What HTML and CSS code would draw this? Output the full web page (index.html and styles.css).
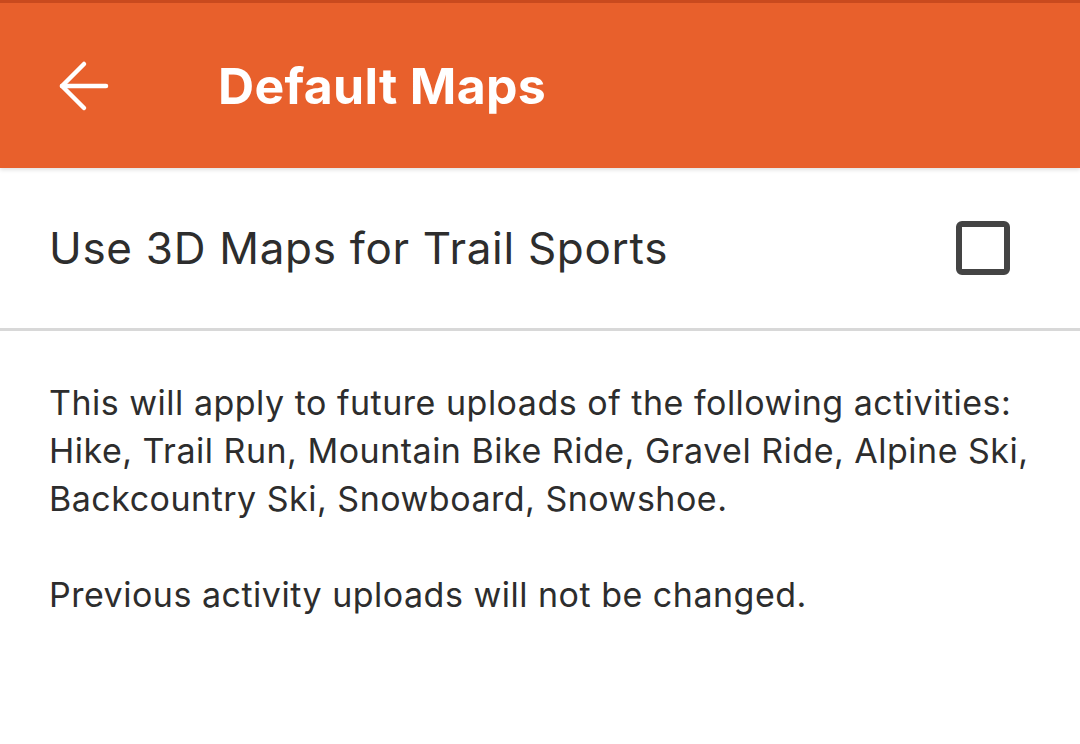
FILE: index.html
```html
<!DOCTYPE html>
<html lang="en">
<head>
    <meta charset="UTF-8">
    <meta name="viewport" content="width=device-width, initial-scale=1.0">
    <title>Default Maps</title>
    <link rel="stylesheet" href="styles.css">
</head>
<body>
    <header class="app-bar">
        <button class="back-btn" aria-label="Back">
            <svg width="52" height="52" viewBox="0 0 52 52" fill="none" stroke="currentColor" stroke-width="4.5" stroke-linecap="round" stroke-linejoin="round">
                <path d="M48 26H4"/>
                <path d="M26 4L4 26l22 22"/>
            </svg>
        </button>
        <h1>Default Maps</h1>
    </header>

    <label class="setting-row">
        <span class="setting-label">Use 3D Maps for Trail Sports</span>
        <span class="checkbox"></span>
    </label>

    <div class="notes">
        <p>This will apply to future uploads of the following activities: Hike, Trail Run, Mountain Bike Ride, Gravel Ride, Alpine Ski, Backcountry Ski, Snowboard, Snowshoe.</p>
        <p>Previous activity uploads will not be changed.</p>
    </div>
</body>
</html>
```

FILE: styles.css
```css
body {
    margin: 0;
    font-family: Inter, "Noto Sans", sans-serif;
    background: #fff;
    color: #2d2d2d;
}
.app-bar {
    height: 168px;
    box-sizing: border-box;
    background: #e8602c;
    border-top: 3px solid #c94a1e;
    display: flex;
    align-items: center;
    padding: 0 0 0 58px;
    box-shadow: 0 2px 4px rgba(0, 0, 0, 0.12);
    color: #fff;
}
.back-btn {
    background: none;
    border: none;
    padding: 0;
    color: #fff;
    display: flex;
    margin-right: 108px;
}
.app-bar h1 {
    margin: 0;
    font-size: 50px;
    font-weight: 700;
    letter-spacing: 0.3px;
}
.setting-row {
    display: flex;
    align-items: center;
    justify-content: space-between;
    height: 160px;
    padding: 0 70px 0 49px;
    border-bottom: 3px solid #d8d8d8;
}
.setting-label {
    font-size: 44px;
    letter-spacing: 0.7px;
}
.checkbox {
    width: 42px;
    height: 42px;
    border: 6px solid #444;
    border-radius: 6px;
}
.notes {
    padding: 48px 49px 0;
    font-size: 34px;
    line-height: 48px;
    letter-spacing: 0.5px;
}
.notes p {
    margin: 0 0 48px;
}
```
